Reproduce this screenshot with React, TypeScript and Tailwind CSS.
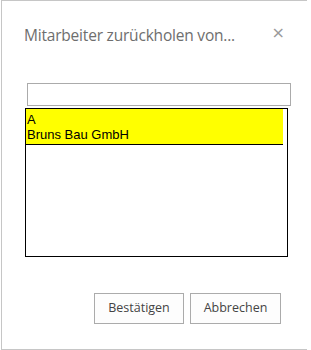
export default function App() {
  return (
    <div className="h-[350px] w-[311px] bg-white">
      <div className="ml-px flex h-[350px] w-[306px] flex-col border-t border-b border-l border-[#c6c6c6] bg-white">
        <div className="flex items-start justify-between pl-[22px] pr-[22px] pt-[23px]">
          <h1 className="font-['Open_Sans',sans-serif] text-[15.5px] leading-[22px] font-normal tracking-[-0.2px] text-[#6e6e6e]">
            Mitarbeiter zurückholen von...
          </h1>
          <span className="mt-[-1px] font-['DejaVu_Sans',sans-serif] text-[16px] leading-[20px] text-[#9a9a9a]">
            ×
          </span>
        </div>

        <input
          type="text"
          className="ml-[25px] mt-[37px] h-[23px] w-[264px] border border-[#ababab] bg-white px-1 text-[13px] outline-none"
        />

        <div className="ml-[23px] mt-[2px] h-[149px] w-[263px] border border-black bg-white font-['Liberation_Sans',Arial,sans-serif] text-[13px] leading-[15px] text-black">
          <div className="h-[36px] w-[257px] border-b border-black bg-[#ffff00] pl-px pt-[3px]">
            <div>A</div>
            <div>Bruns Bau GmbH</div>
          </div>
        </div>

        <div className="mt-auto mb-[25px] flex justify-end gap-[6px] pr-[26px]">
          <button className="h-[31px] w-[90px] border border-[#ababab] bg-[#fdfdfd] font-['Open_Sans',sans-serif] text-[12.5px] text-[#444444]">
            Bestätigen
          </button>
          <button className="h-[31px] w-[91px] border border-[#ababab] bg-[#fdfdfd] font-['Open_Sans',sans-serif] text-[12.5px] text-[#444444]">
            Abbrechen
          </button>
        </div>
      </div>
    </div>
  );
}
